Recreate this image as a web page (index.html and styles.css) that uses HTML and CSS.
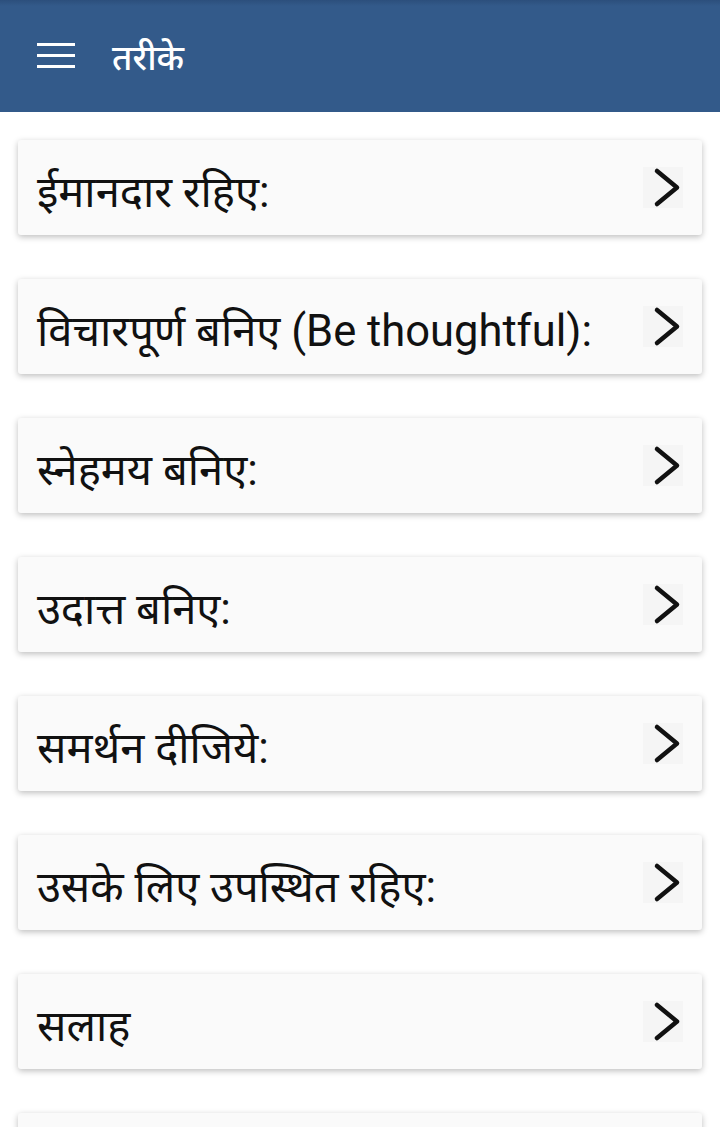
FILE: index.html
```html
<!DOCTYPE html>
<html>
  <head>
    <meta charset="utf-8">
    <title>तरीके</title>
    <link rel="stylesheet" href="styles.css">
  </head>
  <body>
    <header class="toolbar">
      <div class="menu_btn">
        <span></span><span></span><span></span>
      </div>
      <h1 class="toolbar_title">तरीके</h1>
    </header>
    <main class="list">
      <div class="card"><p class="card_text">ईमानदार रहिए:</p><span class="arrow"><svg viewBox="0 0 40 41"><path d="M14 4 L34 20.5 L14 37"/></svg></span></div>
      <div class="card"><p class="card_text">विचारपूर्ण बनिए (Be thoughtful):</p><span class="arrow"><svg viewBox="0 0 40 41"><path d="M14 4 L34 20.5 L14 37"/></svg></span></div>
      <div class="card"><p class="card_text">स्नेहमय बनिए:</p><span class="arrow"><svg viewBox="0 0 40 41"><path d="M14 4 L34 20.5 L14 37"/></svg></span></div>
      <div class="card"><p class="card_text">उदात्त बनिए:</p><span class="arrow"><svg viewBox="0 0 40 41"><path d="M14 4 L34 20.5 L14 37"/></svg></span></div>
      <div class="card"><p class="card_text">समर्थन दीजिये:</p><span class="arrow"><svg viewBox="0 0 40 41"><path d="M14 4 L34 20.5 L14 37"/></svg></span></div>
      <div class="card"><p class="card_text">उसके लिए उपस्थित रहिए:</p><span class="arrow"><svg viewBox="0 0 40 41"><path d="M14 4 L34 20.5 L14 37"/></svg></span></div>
      <div class="card"><p class="card_text">सलाह</p><span class="arrow"><svg viewBox="0 0 40 41"><path d="M14 4 L34 20.5 L14 37"/></svg></span></div>
      <div class="card"><p class="card_text">&nbsp;</p><span class="arrow"><svg viewBox="0 0 40 41"><path d="M14 4 L34 20.5 L14 37"/></svg></span></div>
    </main>
  </body>
</html>
```

FILE: styles.css
```css
* {
  margin: 0;
  padding: 0;
}

body {
  background-color: white;
  font-family: Roboto, "Noto Sans", "Noto Sans Devanagari", sans-serif;
  height: 1127px;
  overflow: hidden;
}

.toolbar {
  background: linear-gradient(#2c4f7c 0, #335a8a 6px, #335a8a 100%);
  box-sizing: border-box;
  color: white;
  display: flex;
  align-items: center;
  height: 112px;
  padding: 0 0 0 37px;
}

.menu_btn {
  display: flex;
  flex-direction: column;
  gap: 8px;
  width: 38px;
  margin-top: -2px;
}

.menu_btn span {
  background-color: white;
  display: block;
  height: 3px;
}

.toolbar_title {
  font-size: 35px;
  font-weight: 500;
  margin-left: 37px;
  margin-top: 0;
}

.list {
  display: flex;
  flex-direction: column;
  gap: 44px;
  padding: 28px 18px 0 18px;
}

.card {
  background-color: #fafafa;
  border-radius: 3px;
  box-shadow: 0 2px 6px rgba(0, 0, 0, 0.26);
  box-sizing: border-box;
  color: #111;
  display: flex;
  align-items: center;
  justify-content: space-between;
  height: 95px;
  padding: 0 19px 0 19px;
}

.card_text {
  font-size: 43.5px;
  margin-top: 4px;
  white-space: nowrap;
}

.arrow {
  background-color: #f5f5f5;
  display: block;
  height: 41px;
  width: 40px;
  margin-top: -1px;
}

.arrow svg {
  display: block;
  height: 41px;
  width: 40px;
}

.arrow path {
  fill: none;
  stroke: #111;
  stroke-width: 4.5;
  stroke-linecap: round;
  stroke-linejoin: round;
}
```
